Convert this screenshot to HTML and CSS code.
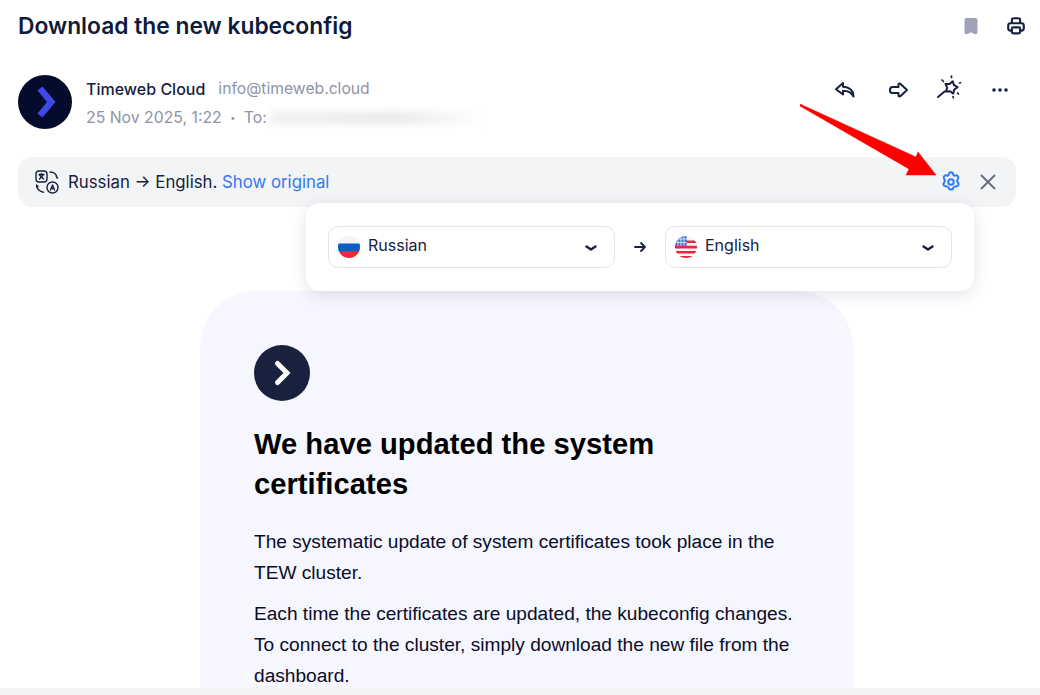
FILE: index.html

```html
<!DOCTYPE html>
<html>
    <head>
        <meta charset="UTF-8">
        <meta name="viewport" content="width=device-width, initial-scale=1.0">
        <link rel="stylesheet" href="styles.css">
    </head>
    <body>
        <div class="mail">
            <div class="subject-row">
                <h1 class="subject">Download the new kubeconfig</h1>
                <div class="subject-tools">
                    <svg class="icon" width="24" height="24" viewBox="0 0 24 24"><path d="M7.500 4h9a2 2 0 0 1 2 2v13a1 1 0 0 1-1 1h-2.500c-.5 0-.8-1.500-3-1.500s-2.500 1.500-3 1.500H6.500a1 1 0 0 1-1-1V6a2 2 0 0 1 2-2z" fill="#a0a3b8"/></svg>
                    <svg class="icon" width="22" height="22" viewBox="0 0 24 24" fill="none" stroke="#16213f" stroke-width="2.300" stroke-linejoin="round"><path d="M7.500 9V5.500a2 2 0 0 1 2-2h5a2 2 0 0 1 2 2V9"/><path d="M7 17H6a2.500 2.500 0 0 1-2.500-2.500v-3A2.500 2.500 0 0 1 6 9h12a2.500 2.500 0 0 1 2.500 2.500v3A2.500 2.500 0 0 1 18 17h-1"/><rect x="7.500" y="13.500" width="9" height="6.500" rx="1.500"/></svg>
                </div>
            </div>

            <div class="sender-row">
                <div class="avatar">
                    <svg width="54" height="54" viewBox="0 0 54 54"><path d="M19.500 15.500l5-4 13 15.500-13 15.500-5-4 9.500-11.500z" fill="#4049e6"/></svg>
                </div>
                <div class="sender-info">
                    <div class="sender-line">
                        <span class="sender-name">Timeweb Cloud</span>
                        <span class="sender-mail">info@timeweb.cloud</span>
                    </div>
                    <div class="date-line">
                        <span>25 Nov 2025, 1:22</span>
                        <span class="dot">&bull;</span>
                        <span>To:</span>
                        <span class="blurred"></span>
                    </div>
                </div>
                <div class="actions">
                    <svg class="icon" width="24" height="24" viewBox="0 0 24 24" fill="none" stroke="#16213f" stroke-width="2" stroke-linejoin="round" stroke-linecap="round"><path d="M8 5L1 11.200l7 5.300v-3.700c3.500 0 8 .8 10.500 5.700 0-5.500-3.500-9.500-10.500-9.800z"/></svg>
                    <svg class="icon" width="24" height="24" viewBox="0 0 24 24" fill="none" stroke="#16213f" stroke-width="2" stroke-linejoin="round"><path d="M14 5.500l7 6.500-7 6.500-1.500-.5v-3h-6a2.500 2.500 0 0 1-2.500-2.500v-1A2.500 2.500 0 0 1 6.500 9h6V6z"/></svg>
                    <svg class="icon" width="24" height="24" viewBox="0 0 24 24" fill="none" stroke="#16213f" stroke-width="2" stroke-linejoin="round" stroke-linecap="round"><path d="M15.700 3.200L17 7.100l3.500 2.100-3.300 2.400-.9 4-3.300-2.400-4.100.4 1.300-3.900-1.700-3.700 4.100 0z"/><path d="M1 19l6.500-5.500"/><path d="M14.500-2v1.500M5 2l1.500 1.500M22.500 5l1-.3M16 18.500l.4 1.300M20.500 15l1 1" stroke-width="1.700"/></svg>
                    <svg class="icon" width="24" height="24" viewBox="0 0 24 24" fill="#16213f"><circle cx="6" cy="12" r="1.800"/><circle cx="12" cy="12" r="1.800"/><circle cx="18" cy="12" r="1.800"/></svg>
                </div>
            </div>

            <div class="translate-bar">
                <svg width="24" height="24" viewBox="0 0 24 24" fill="none" stroke="#16213f" stroke-width="1.400" stroke-linecap="round" stroke-linejoin="round"><rect x="1" y="1" width="11" height="11" rx="3"/><path d="M4 4.500h5M6.500 3.500v1M4.500 9l4-4.500M4.500 5l4 4"/><circle cx="17.500" cy="17.500" r="5.500"/><path d="M15.500 20l2-5 2 5M16.200 18.500h2.600"/><path d="M15 2c3.500 0 6.500 2 7 6M22.500 8l-1.200-1.500M1.500 15c0 3.500 3 7 7 7.200M1.500 15l1.500 1.500"/></svg>
                <span class="translate-text">Russian &rarr; English. <a class="link">Show original</a></span>
                <svg class="gear" width="24" height="24" viewBox="0 0 24 24" fill="none" stroke="#2f7bf5" stroke-width="2" stroke-linejoin="round"><circle cx="12" cy="12" r="2.800"/><path d="M10 3.600a2 2 0 0 1 4 0c.3 1 1.200 1.500 2.200 1.200a2 2 0 0 1 2.800 1c.6 1 .4 1.700-.2 2.400-.6.800-.6 2.800 0 3.600.6.700 1.200 1.600.6 2.600-.5 1-1.400 1.300-2.200 1.200-1-.2-2.600.8-3 1.800-.3.900-1 1.500-2.200 1.500s-1.900-.6-2.200-1.500c-.4-1-2-2-3-1.800-.8.100-1.700-.2-2.200-1.200-.6-1 0-1.900.6-2.600.6-.8.6-2.800 0-3.600-.6-.7-.8-1.400-.2-2.400a2 2 0 0 1 2.800-1c1 .3 1.900-.2 2.200-1.200z" transform="translate(0 .7)"/></svg>
                <svg class="close" width="24" height="24" viewBox="0 0 24 24" fill="none" stroke="#6b6f82" stroke-width="2" stroke-linecap="round"><path d="M5.500 5.500l13 13M18.500 5.500l-13 13"/></svg>
            </div>

            <div class="lang-popup">
                <div class="lang-select">
                    <svg width="22" height="22" viewBox="0 0 22 22"><defs><clipPath id="flagRu"><circle cx="11" cy="11" r="11"/></clipPath></defs><g clip-path="url(#flagRu)"><rect width="22" height="8" fill="#f4f4f6"/><rect y="7.500" width="22" height="8" fill="#0b5fc4"/><rect y="15" width="22" height="7" fill="#ee2a30"/></g></svg>
                    <span class="lang-name">Russian</span>
                    <svg class="chevron" width="14" height="14" viewBox="0 0 14 14" fill="none" stroke="#16213f" stroke-width="2.400" stroke-linecap="round" stroke-linejoin="round"><path d="M2.500 5.500L7 8.500l4.500-3"/></svg>
                </div>
                <svg class="swap-arrow" width="14" height="14" viewBox="0 0 14 14" fill="none" stroke="#16213f" stroke-width="1.800" stroke-linecap="round" stroke-linejoin="round"><path d="M2 7h10M8 3l4 4-4 4"/></svg>
                <div class="lang-select">
                    <svg width="22" height="22" viewBox="0 0 22 22"><defs><clipPath id="flagUs"><circle cx="11" cy="11" r="11"/></clipPath></defs><g clip-path="url(#flagUs)"><rect width="22" height="22" fill="#f6f6f8"/><path d="M0 4.500h22v2.600H0zM0 9.800h22v2.600H0zM0 15h22v2.600H0zM0 20h22v2H0z" fill="#e22a3a"/><rect width="11.500" height="10" fill="#3a6fd0"/><path d="M3 0v10M6 0v10M9 0v10M0 3h11.500M0 6.500h11.500" stroke="#dce6f8" stroke-width=".9"/></g></svg>
                    <span class="lang-name">English</span>
                    <svg class="chevron" width="14" height="14" viewBox="0 0 14 14" fill="none" stroke="#16213f" stroke-width="2.400" stroke-linecap="round" stroke-linejoin="round"><path d="M2.500 5.500L7 8.500l4.500-3"/></svg>
                </div>
            </div>

            <svg class="pointer" width="140" height="75" viewBox="0 0 140 75"><path d="M0 0L116 53 118 48 136 71 106 71 109 65 0 2z" fill="#ff0000" stroke="#ff0000" stroke-width=".5" stroke-linejoin="round"/></svg>

            <div class="letter">
                <div class="letter-logo">
                    <svg width="56" height="56" viewBox="0 0 56 56"><path d="M23.500 18.500L33 28l-9.500 9.500" fill="none" stroke="#fff" stroke-width="5" stroke-linecap="round"/></svg>
                </div>
                <h2 class="letter-title">We have updated the system certificates</h2>
                <p class="letter-text">The systematic update of system certificates took place in the TEW cluster.</p>
                <p class="letter-text">Each time the certificates are updated, the kubeconfig changes. To connect to the cluster, simply download the new file from the dashboard.</p>
            </div>
        </div>
        <div class="bottom-strip"></div>
    </body>
</html>
```

FILE: styles.css

```css
html, body {
    margin: 0;
    height: 100%;
    overflow: hidden;
}
body {
    display: flex;
    flex-direction: column;
    height: 695px;
    background: #fff;
    font-family: Inter, "Noto Sans", sans-serif;
    color: #16213f;
}
.mail {
    position: relative;
    flex: 1;
    min-height: 0;
    overflow: hidden;
    padding: 0 24px 0 18px;
}
.bottom-strip {
    height: 7px;
    background: #f3f4f6;
}
.icon {
    display: block;
    overflow: visible;
}

/* subject */
.subject-row {
    display: flex;
    align-items: center;
    justify-content: space-between;
    height: 51px;
}
.subject {
    margin: 0;
    font-size: 22.8px;
    font-weight: 600;
    color: #0f1b3d;
}
.subject-tools {
    display: flex;
    align-items: center;
    gap: 22px;
    margin: 0 -11px 0 0;
}

/* sender */
.sender-row {
    display: flex;
    align-items: center;
    margin-top: 24px;
    height: 54px;
}
.avatar {
    width: 54px;
    height: 54px;
    border-radius: 50%;
    background: #050b2b;
}
.avatar svg {
    display: block;
}
.sender-info {
    flex: 1;
    margin-left: 14px;
    padding-top: 2px;
}
.sender-line, .date-line {
    display: flex;
    align-items: center;
    height: 28px;
}
.sender-name {
    font-size: 16px;
    font-weight: 500;
    color: #16213f;
}
.sender-mail {
    margin: -1px 0 0 13px;
    font-size: 15.7px;
    color: #8f93a8;
}
.date-line {
    font-size: 15.8px;
    color: #8f93a8;
}
.dot {
    margin: 0 8.5px;
    font-size: 9px;
}
.blurred {
    width: 215px;
    height: 14px;
    margin: 1px 0 0 3px;
    background: linear-gradient(to right, #f2f2f2, #ececee 60%, #fff);
    filter: blur(3px);
}
.actions {
    display: flex;
    gap: 27px;
    align-self: flex-start;
    margin: 3px 4px 0 0;
}

/* translate bar */
.translate-bar {
    display: flex;
    align-items: center;
    height: 50px;
    margin-top: 28px;
    padding: 0 16px 0 17px;
    border-radius: 14px;
    background: #f3f4f6;
}
.translate-text {
    flex: 1;
    margin-left: 9px;
    font-size: 16.8px;
}
.link {
    color: #2f7bf5;
}
.close {
    margin-left: 13px;
}
.lang-popup {
    position: absolute;
    left: 306px;
    top: 203px;
    z-index: 2;
    display: flex;
    align-items: center;
    gap: 18px;
    box-sizing: border-box;
    width: 668px;
    height: 88px;
    padding: 0 22px;
    border-radius: 14px;
    background: #fff;
    box-shadow: 0 4px 16px rgba(30, 35, 90, 0.12);
}
.lang-select {
    flex: 1;
    display: flex;
    align-items: center;
    box-sizing: border-box;
    height: 42px;
    padding: 0 16px 0 9px;
    border: 1px solid #e3e4ea;
    border-radius: 10px;
}
.lang-name {
    flex: 1;
    margin-left: 8px;
    margin-top: -4px;
    font-size: 16px;
}
.chevron {
    margin-top: 2px;
}
.swap-arrow {
    flex: none;
}
.pointer {
    position: absolute;
    left: 800px;
    top: 104px;
    z-index: 3;
}

/* letter */
.letter {
    width: 653px;
    margin: 84px 0 0 182px;
    box-sizing: border-box;
    padding: 54px;
    min-height: 500px;
    border-radius: 56px;
    background: #f6f6fe;
}
.letter-logo {
    width: 56px;
    height: 56px;
    border-radius: 50%;
    background: #19213f;
}
.letter-logo svg {
    display: block;
}
.letter-title {
    margin: 23px 0 23px;
    font-family: "Liberation Sans", sans-serif;
    font-size: 29.2px;
    line-height: 40px;
    font-weight: 700;
    color: #000;
}
.letter-text {
    margin: 0 0 11px;
    font-family: "Liberation Sans", sans-serif;
    font-size: 19.12px;
    line-height: 30.7px;
    color: #0a0c2a;
}
```
